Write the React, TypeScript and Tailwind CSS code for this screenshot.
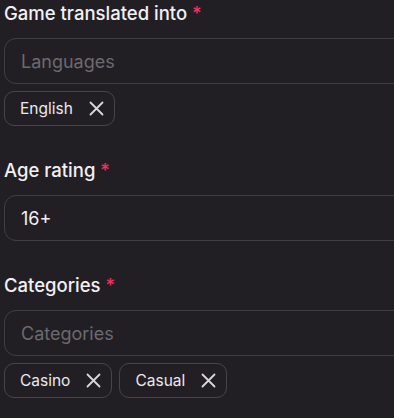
import React from "react";

const XIcon = () => (
  <svg width="15" height="15" viewBox="0 0 15 15" fill="none" className="shrink-0">
    <path d="M1.5 1.5L13.5 13.5M13.5 1.5L1.5 13.5" stroke="#d9d7dc" strokeWidth="1.8" strokeLinecap="round" />
  </svg>
);

const Chip = ({ label }: { label: string }) => (
  <div className="h-[35px] flex items-center gap-[16px] pl-[15px] pr-[10px] rounded-[10px] border border-[#47444b] text-[15.5px] text-[#ebe9ee]">
    <span>{label}</span>
    <XIcon />
  </div>
);

const Label = ({ text }: { text: string }) => (
  <div className="h-[24px] leading-[24px] text-[18.5px] font-medium text-[#f2f0f4] whitespace-nowrap">
    {text} <span className="text-[#f0325f]">*</span>
  </div>
);

const Input = ({ value, placeholder, className }: { value?: string; placeholder?: string; className?: string }) => (
  <div
    className={
      "h-[46px] w-[440px] rounded-[12px] border border-[#413e45] flex items-center pl-[16px] text-[18px] " +
      (className ?? "")
    }
  >
    {value ? <span className="text-[#f2f0f4]">{value}</span> : <span className="text-[#6c6970]">{placeholder}</span>}
  </div>
);

export default function App() {
  return (
    <div
      className="w-[394px] h-[418px] overflow-hidden bg-[#221f24] pl-[4px]"
      style={{ fontFamily: "Inter, 'Noto Sans', sans-serif" }}
    >
      <div className="flex flex-col pt-[1px]">
        <Label text="Game translated into" />
        <Input placeholder="Languages" className="mt-[13px]" />
        <div className="mt-[7px] flex gap-[7px]">
          <Chip label="English" />
        </div>
      </div>
      <div className="flex flex-col mt-[32px]">
        <Label text="Age rating" />
        <Input value="16+" className="mt-[13px]" />
      </div>
      <div className="flex flex-col mt-[32px]">
        <Label text="Categories" />
        <Input placeholder="Categories" className="mt-[13px]" />
        <div className="mt-[7px] flex gap-[7px]">
          <Chip label="Casino" />
          <Chip label="Casual" />
        </div>
      </div>
    </div>
  );
}
